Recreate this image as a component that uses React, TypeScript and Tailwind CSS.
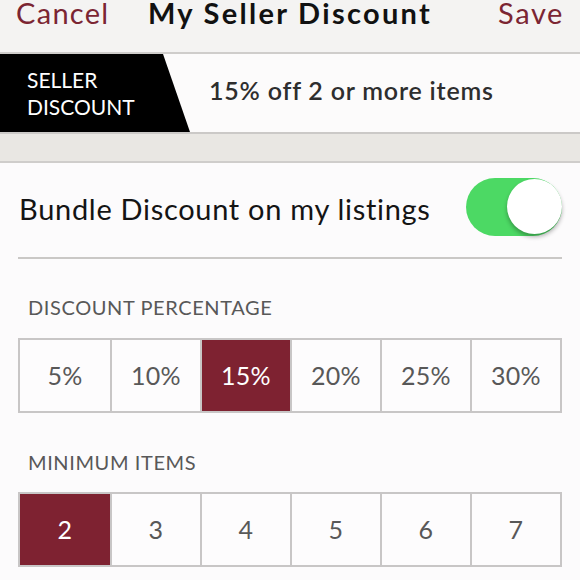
import React, { useState } from "react";

const font = { fontFamily: "Lato, 'Open Sans', 'Liberation Sans', sans-serif" };

function OptionRow({
  options,
  selected,
  onSelect,
}: {
  options: string[];
  selected: string;
  onSelect: (v: string) => void;
}) {
  return (
    <div className="mx-[18px] grid grid-cols-6 border-2 border-[#c8c6c6] bg-[#fdfcfd]">
      {options.map((o, i) => {
        const active = o === selected;
        return (
          <button
            key={o}
            onClick={() => onSelect(o)}
            className={
              "flex h-[71px] items-center justify-center text-[25px] tracking-[0.3px] " +
              (i > 0 ? "border-l-2 border-[#c8c6c6] " : "") +
              (active ? "bg-[#7e2231] text-white" : "text-[#585858]")
            }
          >
            {o}
          </button>
        );
      })}
    </div>
  );
}

export default function App() {
  const [pct, setPct] = useState("15%");
  const [min, setMin] = useState("2");
  const [on, setOn] = useState(true);

  return (
    <div className="h-[580px] w-[580px] overflow-hidden bg-[#fcfbfc]" style={font}>
      {/* navigation bar */}
      <header className="grid h-[54px] grid-cols-[1fr_auto_1fr] items-start border-b-2 border-[#cfcdcb] bg-[#f4f3f2] px-[16px]">
        <button className="justify-self-start text-[29px] leading-[25px] tracking-[1.3px] text-[#7b2532]">
          Cancel
        </button>
        <h1 className="text-[29px] font-bold leading-[25px] tracking-[2.3px] text-[#111111]">
          My Seller Discount
        </h1>
        <button className="justify-self-end text-[29px] leading-[25px] tracking-[1.6px] text-[#7b2532]">
          Save
        </button>
      </header>

      {/* current discount banner */}
      <div className="flex h-[80px] items-center border-b-2 border-[#cbc9c7] bg-[#fcfbfb]">
        <div
          className="flex h-full w-[190px] flex-col justify-center bg-black pl-[27px] text-[21px] leading-[27px] text-white"
          style={{ clipPath: "polygon(0 0, 163px 0, 190px 100%, 0 100%)" }}
        >
          <span>SELLER</span>
          <span>DISCOUNT</span>
        </div>
        <div className="mb-[5px] ml-[19px] text-[25px] font-semibold tracking-[0.8px] text-[#2e2e2e]">
          15% off 2 or more items
        </div>
      </div>

      {/* spacer band */}
      <div className="h-[29px] border-b-2 border-[#cfcdcb] bg-[#e9e7e3]" />

      {/* bundle toggle row */}
      <div className="mx-[18px] flex h-[96px] items-center justify-between border-b-2 border-[#cac8c6]">
        <span className="mb-[3px] pl-[1px] text-[29px] tracking-[0.7px] text-[#141414]">
          Bundle Discount on my listings
        </span>
        <button
          onClick={() => setOn(!on)}
          className={
            "relative -mt-[7px] h-[58px] w-[96px] rounded-full transition-colors " +
            (on ? "bg-[#4cd964]" : "bg-[#e5e5e5]")
          }
        >
          <span
            className={
              "absolute top-[1px] h-[55px] w-[55px] rounded-full bg-white shadow-[0_3px_4px_rgba(0,0,0,0.3)] " +
              (on ? "right-0" : "left-0")
            }
          />
        </button>
      </div>

      {/* discount percentage */}
      <div className="pl-[28px] pt-[38px] pb-[21px] text-[20px] leading-none tracking-[0.6px] text-[#585858]">
        DISCOUNT PERCENTAGE
      </div>
      <OptionRow
        options={["5%", "10%", "15%", "20%", "25%", "30%"]}
        selected={pct}
        onSelect={setPct}
      />

      {/* minimum items */}
      <div className="pl-[28px] pt-[39px] pb-[20px] text-[20px] leading-none tracking-[0.6px] text-[#585858]">
        MINIMUM ITEMS
      </div>
      <OptionRow
        options={["2", "3", "4", "5", "6", "7"]}
        selected={min}
        onSelect={setMin}
      />
    </div>
  );
}
